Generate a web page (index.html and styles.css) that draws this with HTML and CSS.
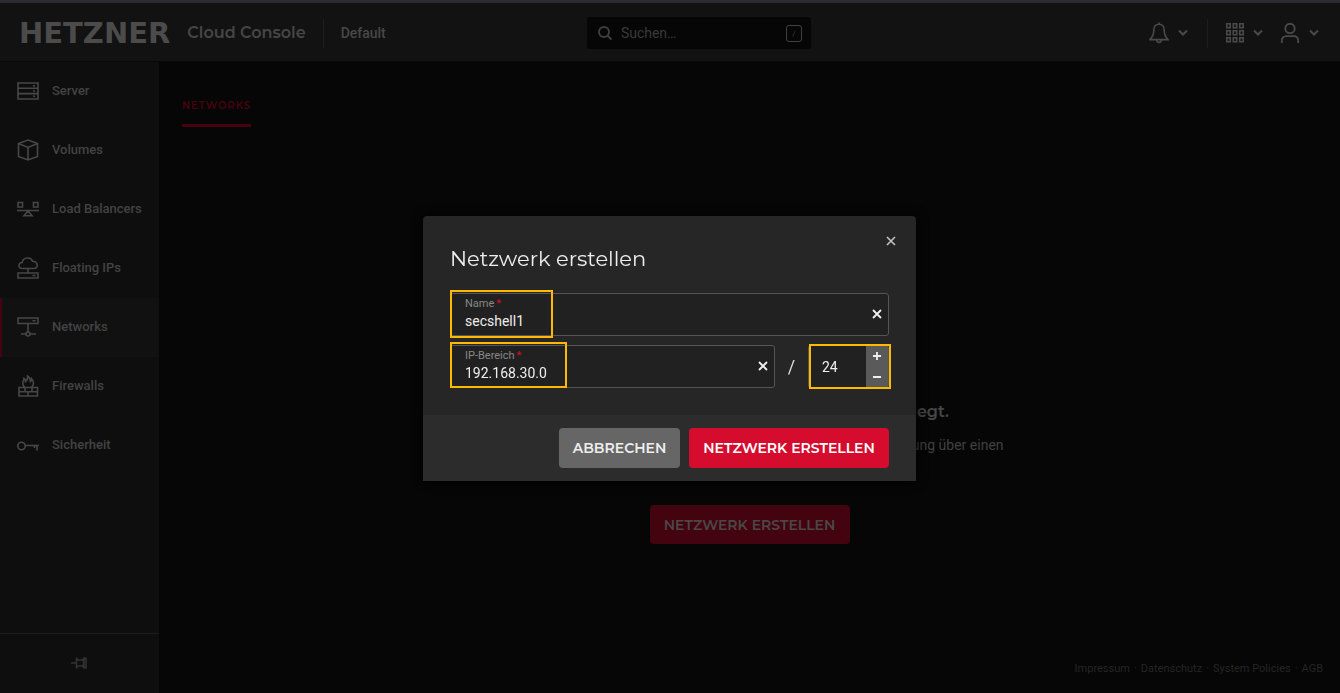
FILE: index.html
```html
<!DOCTYPE html>
<html lang="de">
<head>
<meta charset="utf-8">
<meta name="viewport" content="width=device-width, initial-scale=1">
<title>Hetzner Cloud Console</title>
<link rel="stylesheet" href="styles.css">
</head>
<body>
<div class="app">
  <header class="topbar">
    <div class="topbar-left">
      <a class="logo" href="#">HETZNER</a>
      <span class="product">Cloud Console</span>
      <span class="rule"></span>
      <a class="project" href="#">Default</a>
    </div>
    <label class="search">
      <svg width="16" height="16" viewBox="0 0 16 16" fill="none" stroke="currentColor" stroke-width="2"><circle cx="7" cy="7" r="5"/><path d="M10.6 10.6 14.5 14.5"/></svg>
      <input type="text" placeholder="Suchen…" aria-label="Suchen">
      <kbd>/</kbd>
    </label>
    <div class="topbar-right">
      <button class="tool" type="button" aria-label="Benachrichtigungen">
        <svg width="20" height="22" viewBox="0 0 20 22" fill="none" stroke="currentColor" stroke-width="1.6"><path d="M10 2.200C6.300 2.200 4.800 5 4.800 8c0 5-1.300 7-3.800 9.600h18C16.500 15 15.200 13 15.200 8c0-3-1.500-5.800-5.200-5.800ZM10 2.200V.6M7.500 18c.3 3.200 4.700 3.200 5 0"/></svg>
        <svg class="chev" width="10" height="8" viewBox="0 0 10 8" fill="none" stroke="currentColor" stroke-width="2"><path d="m1 1.500 4 4 4-4"/></svg>
      </button>
      <span class="rule"></span>
      <button class="tool" type="button" aria-label="Produkte">
        <svg width="18" height="20" viewBox="0 0 18 20" fill="none" stroke="currentColor" stroke-width="1.600"><path d="M.8.800h3.400v4H.8zM7.300.8h3.400v4H7.300zM13.800.8h3.400v4h-3.400zM.8 7.800h3.400v4H.8zM7.300 7.800h3.400v4H7.300zM13.800 7.800h3.400v4h-3.400zM.8 14.800h3.400v4H.8zM7.300 14.800h3.400v4H7.300zM13.800 14.800h3.400v4h-3.400z"/></svg>
        <svg class="chev" width="10" height="8" viewBox="0 0 10 8" fill="none" stroke="currentColor" stroke-width="2"><path d="m1 1.500 4 4 4-4"/></svg>
      </button>
      <button class="tool user" type="button" aria-label="Konto">
        <svg width="20" height="20" viewBox="0 0 20 20" fill="none" stroke="currentColor" stroke-width="1.800"><circle cx="10" cy="5.500" r="4.700"/><path d="M1.800 20v-2c0-3 2-4.800 4.600-4.800h7.200c2.600 0 4.600 1.800 4.600 4.800v2"/></svg>
        <svg class="chev" width="10" height="8" viewBox="0 0 10 8" fill="none" stroke="currentColor" stroke-width="2"><path d="m1 1.500 4 4 4-4"/></svg>
      </button>
    </div>
  </header>
  <div class="columns">
    <nav class="sidebar">
      <a class="item" href="#"><svg class="icon" viewBox="0 0 22 22"><path d="M1 3h20v16H1zM1 8.300h20M1 13.600h20"/><path d="M16 5.700h2M16 11h2M16 16.300h2"/></svg>Server</a>
      <a class="item" href="#"><svg class="icon" viewBox="0 0 22 22"><path d="M11 1 20.500 4.500v13L11 21l-9.500-3.500v-13zM1.500 4.500 11 8.500l9.500-4M11 8.500V21"/></svg>Volumes</a>
      <a class="item" href="#"><svg class="icon" viewBox="0 0 22 22"><path d="M1 4.500h4.500V9H1zM16.500 4.500H21V9h-4.500zM0 12.500h22M11 13l-4 4.700h8z"/></svg>Load Balancers</a>
      <a class="item" href="#"><svg class="icon" viewBox="0 0 22 22"><path d="M5.500 11.500C.8 11.500.8 5.500 5.200 5.500 6-.2 14.300-.2 15.500 4.300c6 .2 6 7.200 1.500 7.200zM11 11.500V16M1 16h20v5H1zM15.500 18.500h3"/></svg>Floating IPs</a>
      <a class="item active" href="#"><svg class="icon" viewBox="0 0 22 22"><path d="M1 2h20v5.500H1zM15.500 4.700h3M11 8v8M4 18h5M13 18h6"/><circle cx="11" cy="18" r="2"/></svg>Networks</a>
      <a class="item" href="#"><svg class="icon" viewBox="0 0 22 22"><path d="M2 12.500h18.500V21H2zM2 16.700h18.500M8 12.500v4M15 12.500v4M11 17v4M7.500 12C3.500 8 7 6 7 3.500c1.300.8 1.600 2 1.600 3C10.500 5 11 3.500 10.500 1c2.500 1.500 3 3.500 3 5.500.8-.6 1.300-1.500 1.300-2.500 2.500 3.500 2.200 6-.3 8"/></svg>Firewalls</a>
      <a class="item" href="#"><svg class="icon" viewBox="0 0 22 22"><circle cx="4.500" cy="12" r="3.700"/><path d="M8.200 11.500H22M20 12v4.500M17.500 12v2"/></svg>Sicherheit</a>
      <button class="pin" type="button" aria-label="Menü anheften">
        <svg width="16" height="12" viewBox="0 0 16 12" fill="none" stroke="currentColor" stroke-width="1.500"><path d="M0 6h5M5.500.500v11M5.500 2l2 1h4l1.500-1.500v9l-1.500-1.500h-4l-2 1M12.500 1.200H15v9.600h-2.500z"/></svg>
      </button>
    </nav>
    <main class="content">
      <div class="tabs"><a class="tab" href="#">NETWORKS</a></div>
      <section class="empty">
        <h2>Du hast bisher kein einziges Netzwerk angelegt.</h2>
        <p>Netzwerke ermöglichen allen deinen Systemen eine private Verbindung über einen<br>privaten Adressbereich.</p>
        <button class="btn dim" type="button">NETZWERK ERSTELLEN</button>
      </section>
      <footer class="legal">
        <a href="#">Impressum</a><span>·</span><a href="#">Datenschutz</a><span>·</span><a href="#">System Policies</a><span>·</span><a href="#">AGB</a>
      </footer>
    </main>
  </div>
</div>

<div class="overlay">
  <form class="dialog" role="dialog" aria-labelledby="dialog-title">
    <div class="dialog-body">
      <button class="close" type="button" aria-label="Schließen"><svg width="10" height="10" viewBox="0 0 10 10" fill="none" stroke="currentColor" stroke-width="1.600"><path d="m1 1 8 8M9 1 1 9"/></svg></button>
      <h1 id="dialog-title">Netzwerk erstellen</h1>
      <div class="field">
        <label for="name">Name<i>*</i></label>
        <input id="name" type="text" value="secshell1">
        <button class="clear" type="button" aria-label="Name leeren"><svg width="10" height="10" viewBox="0 0 10 10" fill="none" stroke="currentColor" stroke-width="1.800"><path d="m1 1 8 8M9 1 1 9"/></svg></button>
        <span class="mark mark-name"></span>
      </div>
      <div class="row">
        <div class="field">
          <label for="range">IP-Bereich<i>*</i></label>
          <input id="range" type="text" value="192.168.30.0">
          <button class="clear" type="button" aria-label="IP-Bereich leeren"><svg width="10" height="10" viewBox="0 0 10 10" fill="none" stroke="currentColor" stroke-width="1.800"><path d="m1 1 8 8M9 1 1 9"/></svg></button>
          <span class="mark mark-range"></span>
        </div>
        <span class="slash">/</span>
        <div class="stepper">
          <input type="text" inputmode="numeric" value="24" aria-label="Präfixlänge">
          <div class="steps">
            <button type="button" aria-label="Erhöhen"><svg width="8" height="8" viewBox="0 0 8 8" stroke="currentColor" stroke-width="1.800"><path d="M4 0v8M0 4h8"/></svg></button>
            <button type="button" aria-label="Verringern"><svg width="8" height="8" viewBox="0 0 8 8" stroke="currentColor" stroke-width="2"><path d="M0 4h8"/></svg></button>
          </div>
          <span class="mark mark-prefix"></span>
        </div>
      </div>
    </div>
    <div class="dialog-actions">
      <button class="btn cancel" type="button">ABBRECHEN</button>
      <button class="btn primary" type="submit">NETZWERK ERSTELLEN</button>
    </div>
  </form>
</div>
</body>
</html>
```

FILE: styles.css
```css
* { box-sizing: border-box; }
body {
  margin: 0;
  background: #060606;
  color: #484848;
  font-family: Roboto, "Liberation Sans", sans-serif;
  font-size: 14px;
}
a { color: inherit; text-decoration: none; }
button, input { font: inherit; color: inherit; }
button { padding: 0; border: 0; background: none; }
input { min-width: 0; padding: 0; border: 0; outline: 0; background: none; }
h1, h2, p { margin: 0; }
svg { display: block; flex: none; }

.app { display: flex; flex-direction: column; min-height: 100vh; }

.topbar {
  display: grid;
  grid-template-columns: 19fr 224px 17fr;
  align-items: center;
  height: 62px;
  padding: 2px 21px 0 19px;
  border-top: 3px solid #2c2b35;
  border-bottom: 1px solid #090909;
  background: #121212;
}
.topbar-left, .topbar-right { display: flex; align-items: center; }
.topbar-right { justify-content: flex-end; }
.logo { font: 700 29px/30px "DejaVu Sans", sans-serif; color: #4b4b4b; }
.product {
  margin-left: 17px;
  font: 600 16px/24px Montserrat, Inter, sans-serif;
  color: #464646;
}
.rule { width: 1px; height: 29px; background: #1d1d1d; }
.topbar-left .rule { margin: 0 17px; }
.project { font-weight: 500; color: #484848; }
.search {
  display: flex;
  align-items: center;
  gap: 8px;
  height: 32px;
  padding: 0 9px 0 10px;
  border-radius: 3px;
  background: #060606;
  color: #3e3e3e;
}
.search input { flex: 1; }
.search input::placeholder { color: #3a3a3a; opacity: 1; }
.search kbd {
  width: 16px;
  height: 17px;
  border: 1px solid #404040;
  border-radius: 3px;
  font: 8px/15px Roboto, sans-serif;
  text-align: center;
}
.tool { display: flex; align-items: center; gap: 9px; color: #4a4a4a; }
.topbar-right .rule { margin: 0 18px 0 19px; }
.user { margin-left: 17px; }

.columns { display: flex; flex: 1; }
.sidebar {
  display: flex;
  flex: none;
  flex-direction: column;
  width: 159px;
  background: #0e0e0e;
}
.item {
  display: flex;
  align-items: center;
  gap: 13px;
  height: 59px;
  padding: 0 15px 2px;
  border-left: 2px solid transparent;
  font-size: 13px;
  font-weight: 500;
  color: #434343;
}
.item.active { border-color: #44030e; background: #111111; }
.icon { width: 22px; height: 22px; fill: none; stroke: #474747; stroke-width: 1.6; }
.pin {
  display: grid;
  place-items: center;
  height: 60px;
  margin-top: auto;
  padding: 0 2px 2px 0;
  border-top: 1px solid #1c1c1c;
  color: #333333;
}

.content { display: flex; flex: 1; flex-direction: column; }
.tabs { display: flex; padding: 33px 23px 0; }
.tab {
  padding-bottom: 8px;
  border-bottom: 3px solid #46030f;
  font: 600 10px/21px Montserrat, Inter, sans-serif;
  letter-spacing: 1px;
  color: #46030f;
}
.empty {
  display: flex;
  flex-direction: column;
  align-items: center;
  margin-top: 271px;
  text-align: center;
}
.empty h2 { font: 600 16px/28px Montserrat, Inter, sans-serif; color: #464646; }
.empty p { margin-top: 8px; font-size: 14px; line-height: 22px; color: #404040; }
.legal {
  display: flex;
  gap: 4px;
  justify-content: flex-end;
  margin-top: auto;
  padding: 0 17px 15px;
  font-size: 11px;
  line-height: 18px;
  color: #252525;
}

.btn {
  height: 40px;
  border-radius: 4px;
  font: 600 14px/20px Montserrat, Inter, sans-serif;
}
.dim { width: 200px; height: 39px; margin-top: 27px; background: #43030f; color: #4c4747; }
.cancel { width: 121px; background: #666666; color: #eeeeee; }
.primary { width: 200px; background: #d50c2d; color: #ffffff; }

.overlay {
  position: fixed;
  inset: 0;
  display: flex;
  align-items: center;
  justify-content: center;
  padding: 4px 1px 0 0;
}
.dialog {
  width: 100%;
  max-width: 493px;
  overflow: hidden;
  border-radius: 4px 4px 0 0;
  background: #262626;
  box-shadow: 0 0 12px #000000;
}
.dialog-body { position: relative; padding: 27px; }
.close { position: absolute; top: 20px; right: 20px; color: #c4c4c4; }
.dialog h1 {
  margin-bottom: 18px;
  font: 400 21px/32px Montserrat, Inter, sans-serif;
  color: #eeeeee;
}
.field {
  position: relative;
  display: grid;
  flex: 1;
  grid-template-columns: 1fr 10px;
  height: 43px;
  padding: 2px 6px 5px 14px;
  border: 1px solid #555555;
  border-radius: 3px;
  background: #212121;
}
.field label { font-size: 11px; line-height: 16px; color: #888888; }
.field i { margin-left: 2px; color: #d50c2d; font-style: normal; }
.field input { grid-row: 2; color: #eeeeee; font-size: 14px; line-height: 18px; }
.clear { grid-row: 1 / 3; grid-column: 2; align-self: center; padding-top: 2px; color: #f0f0f0; }
.row { display: flex; align-items: center; margin-top: 9px; }
.slash { width: 33px; font-size: 18px; text-align: center; color: #dddddd; }
.stepper {
  position: relative;
  display: flex;
  width: 81px;
  height: 43px;
  border: 1px solid #555555;
  border-radius: 3px;
  background: #212121;
}
.stepper input { flex: 1; padding-left: 13px; color: #eeeeee; }
.steps { display: flex; flex-direction: column; width: 22px; background: #5a5a5a; color: #eeeeee; }
.steps button { display: grid; flex: 1; place-items: center; }
.mark { position: absolute; border: 2px solid #ffb900; pointer-events: none; }
.mark-name { top: -4px; left: -1px; width: 103px; height: 48px; }
.mark-range { top: -4px; left: -1px; width: 117px; height: 46px; }
.mark-prefix { inset: -2px -3px -2px 0; }
.dialog-actions {
  display: flex;
  justify-content: flex-end;
  gap: 9px;
  padding: 13px 27px;
  background: #2c2c2c;
}
```
